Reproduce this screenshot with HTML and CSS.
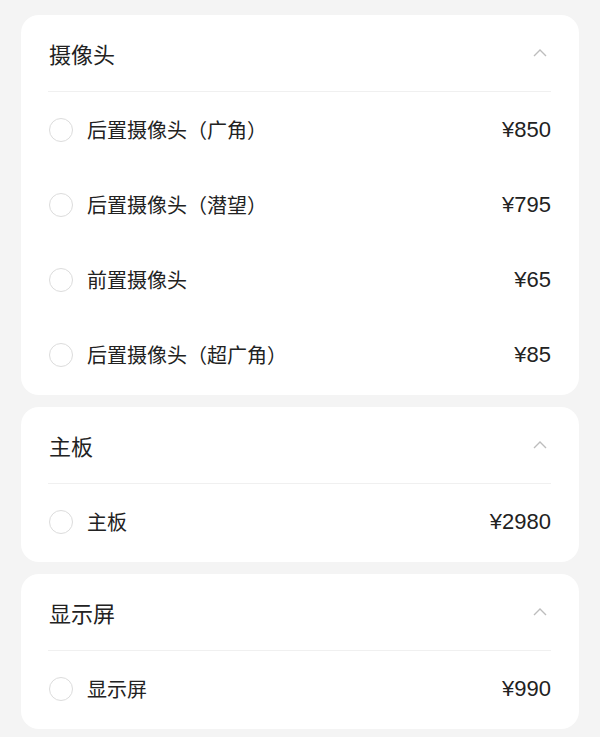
FILE: index.html
```html
<!DOCTYPE html>
<html lang="zh-CN">
<head>
    <meta charset="UTF-8">
    <meta name="viewport" content="width=device-width, initial-scale=1.0">
    <title>维修价格</title>
    <link rel="stylesheet" href="styles.css">
</head>
<body>

    <div class="group">
        <div class="group-header">
            <span class="group-title">摄像头</span>
            <svg class="chevron" width="14" height="8" viewBox="0 0 14 8"><path d="M1 7 L7 1 L13 7" fill="none" stroke="#bdbdbd" stroke-width="1.4"/></svg>
        </div>
        <div class="item"><span class="radio"></span><span class="item-name">后置摄像头（广角）</span><span class="price">¥850</span></div>
        <div class="item"><span class="radio"></span><span class="item-name">后置摄像头（潜望）</span><span class="price">¥795</span></div>
        <div class="item"><span class="radio"></span><span class="item-name">前置摄像头</span><span class="price">¥65</span></div>
        <div class="item"><span class="radio"></span><span class="item-name">后置摄像头（超广角）</span><span class="price">¥85</span></div>
    </div>

    <div class="group">
        <div class="group-header">
            <span class="group-title">主板</span>
            <svg class="chevron" width="14" height="8" viewBox="0 0 14 8"><path d="M1 7 L7 1 L13 7" fill="none" stroke="#bdbdbd" stroke-width="1.4"/></svg>
        </div>
        <div class="item"><span class="radio"></span><span class="item-name">主板</span><span class="price">¥2980</span></div>
    </div>

    <div class="group">
        <div class="group-header">
            <span class="group-title">显示屏</span>
            <svg class="chevron" width="14" height="8" viewBox="0 0 14 8"><path d="M1 7 L7 1 L13 7" fill="none" stroke="#bdbdbd" stroke-width="1.4"/></svg>
        </div>
        <div class="item"><span class="radio"></span><span class="item-name">显示屏</span><span class="price">¥990</span></div>
    </div>

</body>
</html>
```

FILE: styles.css
```css
body {
    font-family: 'Noto Sans CJK SC', 'Noto Sans', sans-serif;
    background-color: #f4f4f4;
    color: #222;
    margin: 0;
    padding: 15px 21px 0;
    display: flex;
    flex-direction: column;
    gap: 12px;
}
.group {
    background: #fff;
    border-radius: 18px;
    padding: 0 28px 3px 27px;
}
.group-header {
    display: flex;
    justify-content: space-between;
    align-items: center;
    height: 77px;
    border-bottom: 1px solid #f0f0f0;
    box-sizing: border-box;
}
.group-title {
    font-size: 22px;
    padding-left: 1px;
}
.chevron {
    margin-right: 4px;
}
.item {
    display: flex;
    align-items: center;
    height: 75px;
}
.radio {
    width: 22px;
    height: 22px;
    border: 1px solid #dcdcdc;
    border-radius: 50%;
    margin-left: 1px;
    margin-right: 14px;
}
.item-name {
    flex: 1;
    font-size: 20px;
}
.price {
    font-size: 22px;
    font-family: 'Liberation Sans', 'Noto Sans CJK SC', sans-serif;
}
```
